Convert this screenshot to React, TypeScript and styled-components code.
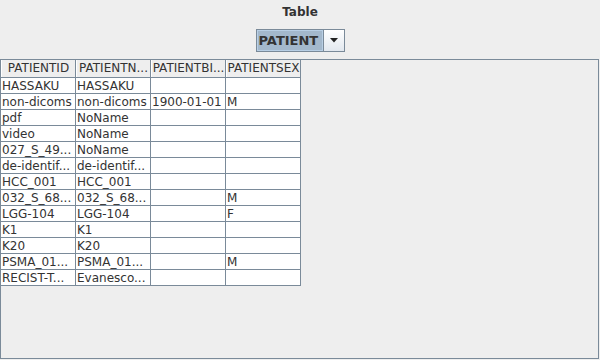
import styled, { createGlobalStyle } from 'styled-components'

const Global = createGlobalStyle`
	html, body {
		margin: 0;
		padding: 0;
		background: #eeeeee;
	}
	body {
		font-family: "DejaVu Sans", sans-serif;
		font-size: 12px;
		color: #333333;
	}
`

const columns = ['PATIENTID', 'PATIENTN...', 'PATIENTBI...', 'PATIENTSEX']

const rows: string[][] = [
	['HASSAKU', 'HASSAKU', '', ''],
	['non-dicoms', 'non-dicoms', '1900-01-01', 'M'],
	['pdf', 'NoName', '', ''],
	['video', 'NoName', '', ''],
	['027_S_49...', 'NoName', '', ''],
	['de-identif...', 'de-identif...', '', ''],
	['HCC_001', 'HCC_001', '', ''],
	['032_S_68...', '032_S_68...', '', 'M'],
	['LGG-104', 'LGG-104', '', 'F'],
	['K1', 'K1', '', ''],
	['K20', 'K20', '', ''],
	['PSMA_01...', 'PSMA_01...', '', 'M'],
	['RECIST-T...', 'Evanesco...', '', ''],
]

export default function App() {
	return (
		<Page>
			<Global />
			<Title>Table</Title>
			<Combo>
				<ComboValue>PATIENT</ComboValue>
				<ComboArrow>
					<svg width="8" height="5" viewBox="0 0 8 5">
						<path d="M0 0 H8 L4 4.5 Z" fill="#222" />
					</svg>
				</ComboArrow>
			</Combo>
			<ScrollPane>
				<Grid>
					<HeaderRow>
						{columns.map((c) => (
							<HeaderCell key={c}>{c}</HeaderCell>
						))}
					</HeaderRow>
					{rows.map((r, i) => (
						<Row key={i}>
							{r.map((v, j) => (
								<Cell key={j}>{v}</Cell>
							))}
						</Row>
					))}
				</Grid>
			</ScrollPane>
		</Page>
	)
}

const Page = styled.div`
	width: 600px;
	height: 360px;
	display: flex;
	flex-direction: column;
	align-items: center;
	overflow: hidden;
`

const Title = styled.div`
	padding-top: 4px;
	height: 20px;
	line-height: 16px;
	font-weight: bold;
	color: #333333;
`

const Combo = styled.div`
	margin-top: 5px;
	width: 89px;
	height: 23px;
	box-sizing: border-box;
	border: 1px solid #7a8a99;
	display: flex;
	background: #a3b8cc;
`

const ComboValue = styled.div`
	flex: 1;
	padding-left: 1px;
	display: flex;
	align-items: center;
	font-weight: bold;
	font-size: 13px;
	color: #333333;
	border: 1px solid #b8cfe5;
`

const ComboArrow = styled.div`
	width: 20px;
	border-left: 1px solid #7a8a99;
	background: linear-gradient(#ffffff, #e2e8ef);
	display: flex;
	align-items: center;
	justify-content: center;
`

const ScrollPane = styled.div`
	margin-top: 7px;
	align-self: flex-start;
	width: 599px;
	height: 300px;
	box-sizing: border-box;
	border: 1px solid #7a8a99;
	background: #eeeeee;
`

const Grid = styled.div`
	width: 300px;
	display: flex;
	flex-direction: column;
`

const HeaderRow = styled.div`
	display: grid;
	grid-template-columns: repeat(4, 75px);
	height: 18px;
	box-sizing: border-box;
	border-bottom: 1px solid #7a8a99;
`

const HeaderCell = styled.div`
	box-sizing: border-box;
	border-right: 1px solid #7a8a99;
	border-left: 1px solid #ffffff;
	background: #eeeeee;
	text-align: center;
	line-height: 17px;
	white-space: nowrap;
	overflow: hidden;
	color: #333333;
`

const Row = styled.div`
	display: grid;
	grid-template-columns: repeat(4, 75px);
	height: 16px;
	box-sizing: border-box;
	border-bottom: 1px solid #7a8a99;
	background: #ffffff;
`

const Cell = styled.div`
	box-sizing: border-box;
	border-right: 1px solid #7a8a99;
	padding-left: 1px;
	line-height: 16px;
	white-space: nowrap;
	overflow: hidden;
	color: #333333;
`
